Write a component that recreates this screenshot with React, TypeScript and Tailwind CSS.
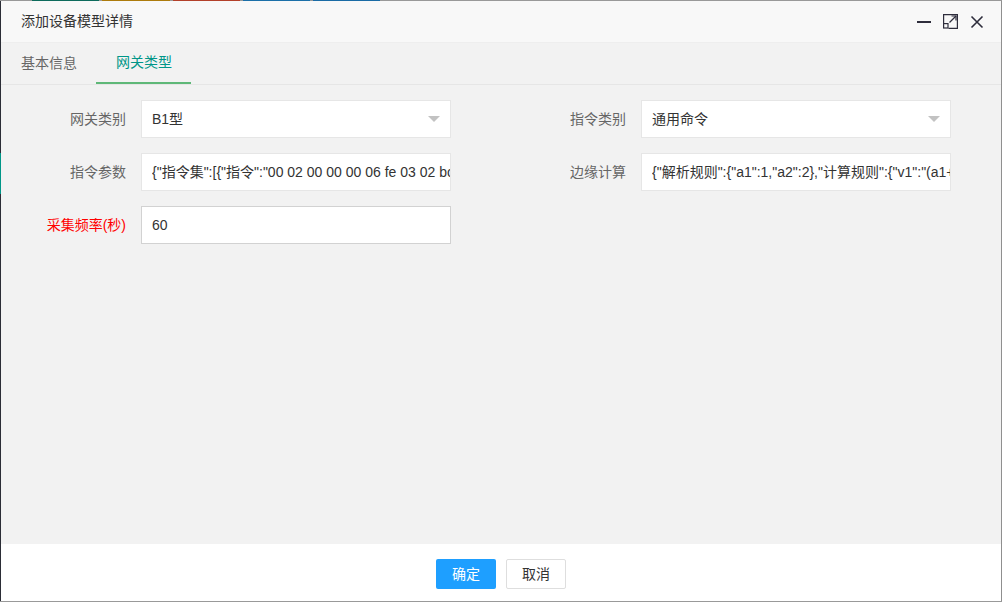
import React from "react";

const font = { fontFamily: '"Liberation Sans", "Noto Sans CJK SC", sans-serif' };

function Caret() {
  return (
    <span className="block w-0 h-0 border-l-[6px] border-r-[6px] border-t-[6px] border-l-transparent border-r-transparent border-t-[#c2c2c2]" />
  );
}

function Field({
  label,
  value,
  select,
  red,
  strong,
}: {
  label: string;
  value: string;
  select?: boolean;
  red?: boolean;
  strong?: boolean;
}) {
  return (
    <div className="flex items-center h-[38px]">
      <div
        className={`w-[140px] pr-[15px] text-right text-[14px] ${red ? "text-[#ff0000]" : "text-[#666]"}`}
      >
        {label}
      </div>
      <div
        className={`w-[310px] h-[38px] bg-white border ${strong ? "border-[#d2d2d2]" : "border-[#e6e6e6]"} flex items-center pl-[10px] ${select ? "pr-[10px]" : ""} overflow-hidden`}
      >
        <div className="flex-1 overflow-hidden whitespace-nowrap text-[14px] text-[#333]">{value}</div>
        {select && (
          <div className="ml-2">
            <Caret />
          </div>
        )}
      </div>
    </div>
  );
}

export default function App() {
  return (
    <div className="w-[1002px] h-[602px] flex flex-col overflow-hidden" style={font}>
      {/* top edge */}
      <div className="h-px flex shrink-0 bg-[#999]">
        <div className="w-[32px]" />
        <div className="w-[67px] bg-[#0d6b5c]" />
        <div className="w-[3px]" />
        <div className="w-[68px] bg-[#ad7b0c]" />
        <div className="w-[3px]" />
        <div className="w-[67px] bg-[#b3402a]" />
        <div className="w-[3px]" />
        <div className="w-[67px] bg-[#1b6fa8]" />
        <div className="w-[3px]" />
        <div className="w-[67px] bg-[#1a6ba5]" />
      </div>
      <div className="flex-1 flex min-h-0">
        {/* left edge */}
        <div className="w-px flex flex-col bg-[#2b2d36] shrink-0">
          <div className="h-[152px]" />
          <div className="h-[41px] bg-[#009688]" />
        </div>
        <div className="flex-1 flex flex-col min-w-0">
          {/* title bar */}
          <div className="h-[42px] bg-[#f8f8f8] border-b border-[#eeeeee] flex items-center pl-[20px] pr-[17px] shrink-0">
            <div className="flex-1 text-[14px] text-[#333]">添加设备模型详情</div>
            <div className="flex items-center gap-[12px] text-[#2e2d3c]">
              <svg width="14" height="14" viewBox="0 0 14 14">
                <rect x="0" y="6" width="14" height="2" fill="currentColor" />
              </svg>
              <svg width="15" height="15" viewBox="0 0 15 15" fill="none" stroke="currentColor" strokeWidth="1.2">
                <path d="M0.6 9 V0.6 H14.4 V14.4 H5.5" />
                <rect x="0.6" y="9.6" width="4.4" height="4.4" />
                <path d="M6.5 8.5 L13 2" />
                <path d="M8.5 2 H13 V6.5" />
              </svg>
              <svg width="14" height="14" viewBox="0 0 14 14" fill="none" stroke="currentColor" strokeWidth="1.6">
                <path d="M1.5 1.5 L12.5 12.5 M12.5 1.5 L1.5 12.5" />
              </svg>
            </div>
          </div>
          {/* tabs */}
          <div className="h-[42px] bg-[#f2f2f2] border-b border-[#e6e6e6] flex items-start shrink-0">
            <div className="pl-[20px] pr-[19px] flex items-center text-[14px] text-[#666] h-[41px]">基本信息</div>
            <div className="pl-[20px] pr-[19px] flex items-center text-[14px] text-[#009688] h-[41px] border-b-2 border-[#5fb878]">
              网关类型
            </div>
          </div>
          {/* content */}
          <div className="flex-1 bg-[#f2f2f2] pt-[15px] min-h-0">
            <div className="grid grid-cols-[500px_500px] gap-y-[15px]">
              <Field label="网关类别" value="B1型" select />
              <Field label="指令类别" value="通用命令" select />
              <Field
                label="指令参数"
                value={'{"指令集":[{"指令":"00 02 00 00 00 06 fe 03 02 bc 00 0a","名称":"读取"}]}'}
              />
              <Field
                label="边缘计算"
                value={'{"解析规则":{"a1":1,"a2":2},"计算规则":{"v1":"(a1+a2)/10"}}'}
              />
              <Field label="采集频率(秒)" value="60" red strong />
            </div>
          </div>
          {/* footer */}
          <div className="h-[57px] bg-white flex items-start justify-center gap-[10px] pt-[15px] shrink-0">
            <div className="w-[60px] h-[30px] rounded-[2px] bg-[#1e9fff] text-white text-[14px] flex items-center justify-center">
              确定
            </div>
            <div className="w-[60px] h-[30px] rounded-[2px] bg-white border border-[#dedede] text-[#333] text-[14px] flex items-center justify-center">
              取消
            </div>
          </div>
        </div>
        {/* right edge */}
        <div className="w-px bg-[#8f8f8f] shrink-0" />
      </div>
      {/* bottom edge */}
      <div className="h-px bg-[#999] shrink-0" />
    </div>
  );
}
